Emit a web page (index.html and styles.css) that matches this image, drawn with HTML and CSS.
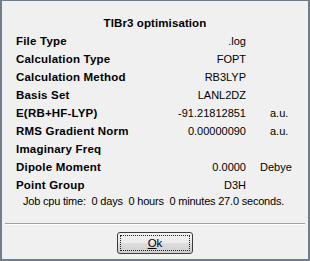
FILE: index.html
```html
<!DOCTYPE html>
<html>
<head>
<meta charset="utf-8">
<link rel="stylesheet" href="styles.css">
</head>
<body>
<div class="dialog">
  <div class="title">TlBr3 optimisation</div>
  <div class="grid">
    <div class="label">File Type</div><div class="value">.log</div><div class="unit"></div>
    <div class="label">Calculation Type</div><div class="value">FOPT</div><div class="unit"></div>
    <div class="label">Calculation Method</div><div class="value">RB3LYP</div><div class="unit"></div>
    <div class="label">Basis Set</div><div class="value">LANL2DZ</div><div class="unit"></div>
    <div class="label">E(RB+HF-LYP)</div><div class="value">-91.21812851</div><div class="unit au">a.u.</div>
    <div class="label">RMS Gradient Norm</div><div class="value">0.00000090</div><div class="unit au">a.u.</div>
    <div class="label">Imaginary Freq</div><div class="value"></div><div class="unit"></div>
    <div class="label">Dipole Moment</div><div class="value">0.0000</div><div class="unit">Debye</div>
    <div class="label">Point Group</div><div class="value">D3H</div><div class="unit"></div>
  </div>
  <div class="cpu">Job cpu time:&nbsp; 0 days&nbsp; 0 hours&nbsp; 0 minutes 27.0 seconds.</div>
  <div class="sep"></div>
  <div class="actions"><button class="btn"><span class="focus"><u>O</u>k</span></button></div>
</div>
</body>
</html>
```
FILE: styles.css
```css
html, body {
  margin: 0;
  padding: 0;
  background: #f0f0f0;
}
.dialog {
  box-sizing: border-box;
  width: 310px;
  height: 261px;
  border: 2px solid #6f7d8c;
  border-top: 1px solid #6f7d8c;
  background: #f0f0f0;
  font-family: "Liberation Sans", Arial, sans-serif;
  color: #000;
  display: flex;
  flex-direction: column;
}
.title {
  margin-top: 13px;
  height: 18px;
  line-height: 18px;
  text-align: center;
  font-weight: bold;
  font-size: 11.5px;
  letter-spacing: 0.1px;
}
.grid {
  display: grid;
  grid-template-columns: 135px 95px 60px;
  grid-auto-rows: 18px;
  padding-left: 14px;
  align-items: center;
}
.label {
  font-weight: bold;
  font-size: 11.5px;
  letter-spacing: 0.2px;
}
.value {
  text-align: right;
  font-size: 11px;
}
.unit {
  padding-left: 14px;
  font-size: 11px;
}
.unit.au {
  padding-left: 24px;
}
.cpu {
  height: 14px;
  line-height: 14px;
  padding-left: 21px;
  font-size: 11px;
  letter-spacing: -0.2px;
}
.sep {
  margin: 15px 3px 0 3px;
  border-top: 1px solid #a0a0a0;
  border-bottom: 1px solid #ffffff;
}
.actions {
  display: flex;
  justify-content: center;
  margin-top: 7px;
}
.btn {
  box-sizing: border-box;
  width: 76px;
  height: 22px;
  padding: 2px;
  border: 1px solid #3c3c3c;
  border-radius: 3px;
  background: linear-gradient(#f2f2f2 0%, #ebebeb 48%, #dddddd 52%, #cfcfcf 100%);
  font-family: "Liberation Sans", Arial, sans-serif;
  font-size: 11.5px;
  color: #000;
  display: flex;
}
.focus {
  flex: 1;
  border: 1px dotted #202020;
  display: flex;
  align-items: center;
  justify-content: center;
}
.focus u {
  text-decoration: underline;
}
```
